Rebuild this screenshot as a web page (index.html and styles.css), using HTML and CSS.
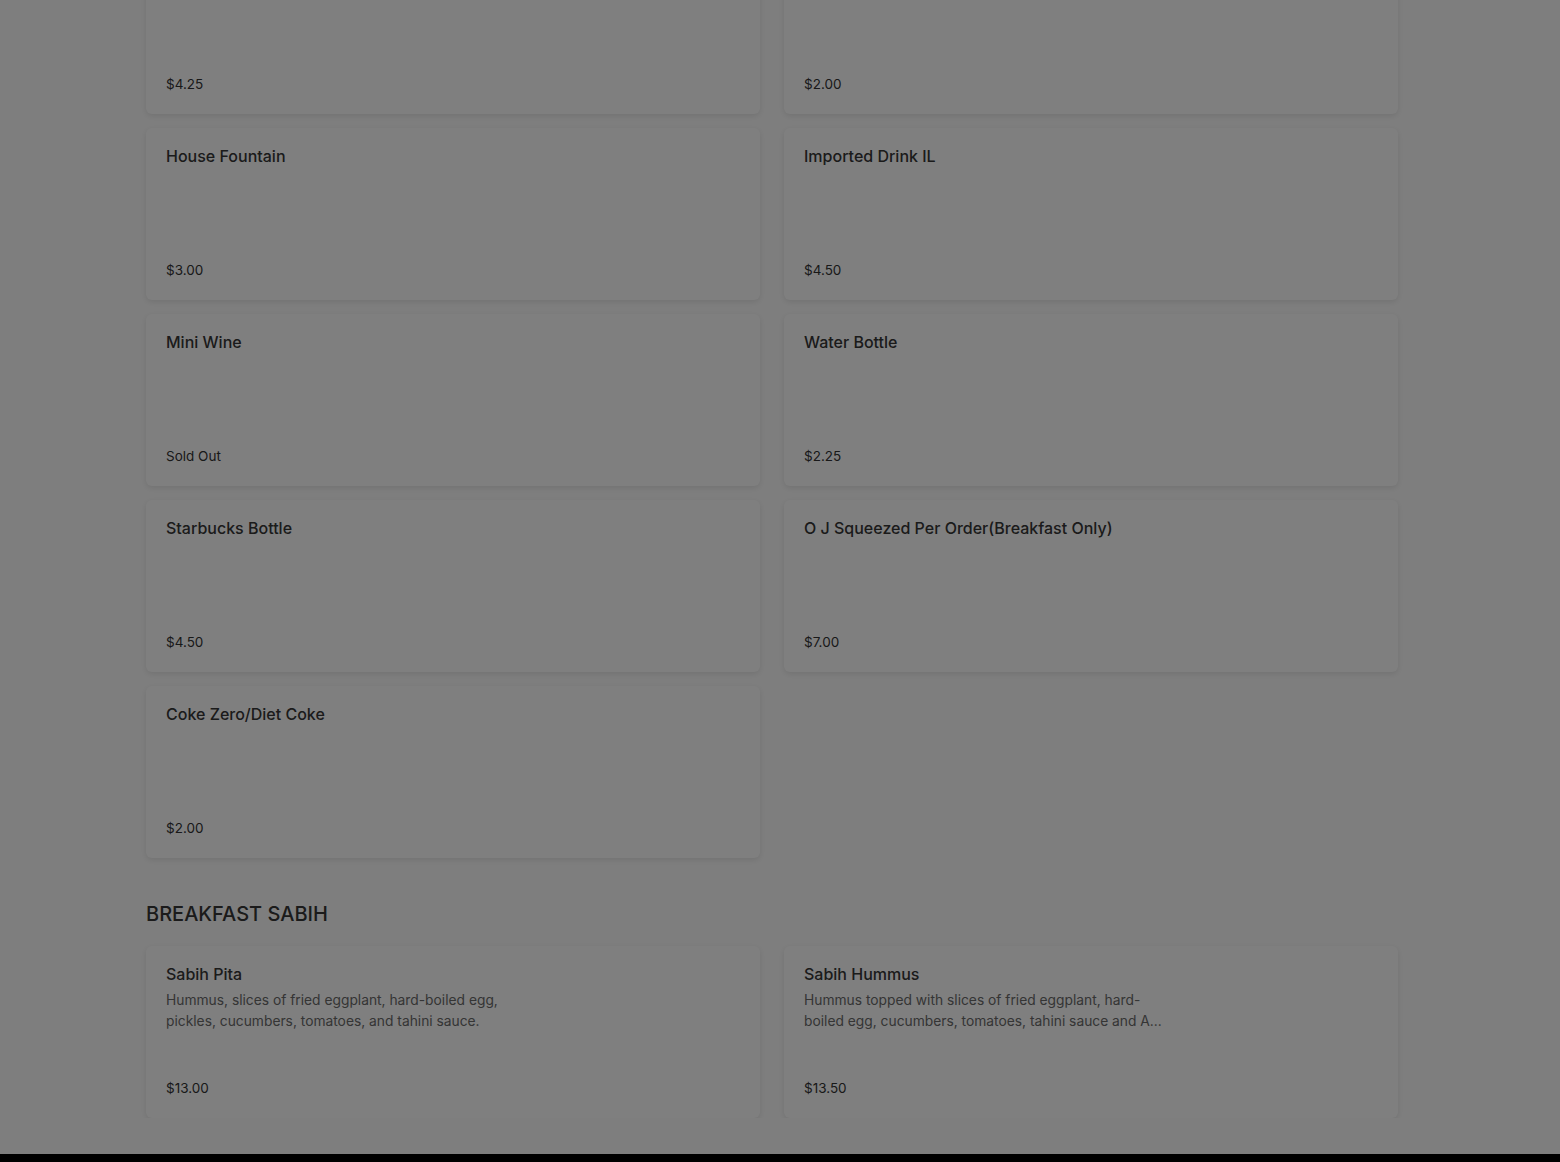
FILE: index.html
```html
<!DOCTYPE html>
<html lang="en">
<head>
<meta charset="utf-8">
<title>Menu</title>
<link rel="stylesheet" href="styles.css">
</head>
<body>
<main class="menu">
  <section class="section">
    <div class="grid">
      <div class="card"><div class="title"></div><div class="price">$4.25</div></div>
      <div class="card"><div class="title"></div><div class="price">$2.00</div></div>
      <div class="card"><div class="title">House Fountain</div><div class="price">$3.00</div></div>
      <div class="card"><div class="title">Imported Drink IL</div><div class="price">$4.50</div></div>
      <div class="card"><div class="title">Mini Wine</div><div class="price">Sold Out</div></div>
      <div class="card"><div class="title">Water Bottle</div><div class="price">$2.25</div></div>
      <div class="card"><div class="title">Starbucks Bottle</div><div class="price">$4.50</div></div>
      <div class="card"><div class="title">O J Squeezed Per Order(Breakfast Only)</div><div class="price">$7.00</div></div>
      <div class="card"><div class="title">Coke Zero/Diet Coke</div><div class="price">$2.00</div></div>
    </div>
  </section>
  <section class="section">
    <h2 class="section-title">BREAKFAST SABIH</h2>
    <div class="grid">
      <div class="card">
        <div class="title">Sabih Pita</div>
        <div class="desc">Hummus, slices of fried eggplant, hard-boiled egg, pickles, cucumbers, tomatoes, and tahini sauce.</div>
        <div class="price">$13.00</div>
      </div>
      <div class="card">
        <div class="title">Sabih Hummus</div>
        <div class="desc">Hummus topped with slices of fried eggplant, hard-boiled egg, cucumbers, tomatoes, tahini sauce and A...</div>
        <div class="price">$13.50</div>
      </div>
    </div>
  </section>
</main>
<div class="overlay"></div>
<div class="sheet-edge"></div>
</body>
</html>
```
FILE: styles.css
```css
html, body {
  margin: 0;
  padding: 0;
  background: #fdfdfd;
  font-family: "Inter", "Liberation Sans", sans-serif;
  color: #333;
  overflow: hidden;
}
.menu {
  width: 1252px;
  margin: -58px 0 0 146px;
}
.grid {
  display: grid;
  grid-template-columns: 1fr 1fr;
  column-gap: 24px;
  row-gap: 14px;
}
.card {
  height: 172px;
  box-sizing: border-box;
  padding: 16px 20px 20px;
  background: #fff;
  border-radius: 6px;
  box-shadow: 0 2px 6px rgba(0, 0, 0, 0.1);
  display: flex;
  flex-direction: column;
}
.title {
  font-size: 16px;
  line-height: 24px;
  font-weight: 500;
  color: #363636;
  min-height: 24px;
}
.desc {
  margin-top: 4px;
  max-width: 375px;
  font-size: 13.8px;
  line-height: 21px;
  color: #6a6a6a;
}
.price {
  margin-top: auto;
  font-size: 13.5px;
  line-height: 20px;
  color: #333;
}
.section-title {
  margin: 42px 0 18px;
  font-size: 20px;
  line-height: 28px;
  font-weight: 500;
  color: #363636;
}
.overlay {
  position: fixed;
  inset: 0;
  background: rgba(0, 0, 0, 0.5);
}
.sheet-edge {
  position: fixed;
  left: 0;
  right: 0;
  bottom: 0;
  height: 8px;
  background: #000;
}
```
